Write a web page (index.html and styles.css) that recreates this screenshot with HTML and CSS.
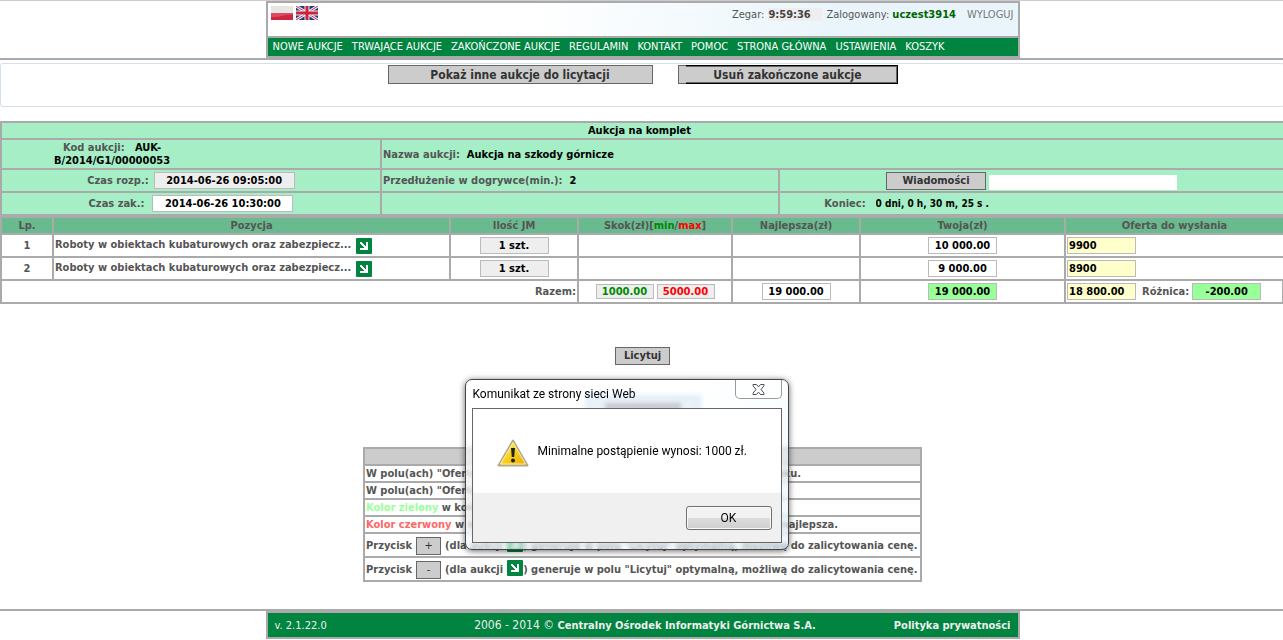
FILE: index.html
```html
<!DOCTYPE html>
<html lang="pl">
<head>
<meta charset="utf-8">
<title>Aukcja na szkody górnicze</title>
<link rel="stylesheet" href="styles.css">
</head>
<body>
<svg class="defs" width="0" height="0" aria-hidden="true">
  <symbol id="arrow" viewBox="0 0 16 16">
    <rect width="16" height="16" rx="1" fill="#00843f"/>
    <path d="M4 4h2v1h1v1h1v1h1v1h1V4h2v8H4v-2h4V9H7V8H6V7H5V6H4z" fill="#fff"/>
  </symbol>
</svg>
<div class="page">
  <header class="site-header">
    <div class="frame">
      <div class="top">
        <div class="flags">
          <svg width="22" height="14" viewBox="0 0 22 14" role="img" aria-label="Polski"><rect width="22" height="14" fill="#e6e6e3"/><rect y="7" width="22" height="7" fill="#cf2540"/><path d="M0 7h22v2C14 8 8 12 0 11z" fill="#dc4a60"/></svg>
          <svg width="22" height="14" viewBox="0 0 22 14" role="img" aria-label="English"><rect width="22" height="14" fill="#1d3a85"/><path d="M0 0l22 14M22 0L0 14" stroke="#eee" stroke-width="3"/><path d="M0 0l22 14M22 0L0 14" stroke="#d0314a" stroke-width="1"/><path d="M11 0v14M0 7h22" stroke="#eee" stroke-width="5"/><path d="M11 0v14M0 7h22" stroke="#d0213c" stroke-width="3"/></svg>
        </div>
        <div class="session">
          <span>Zegar:</span><span class="clock">9:59:36</span>
          <span>Zalogowany: <b>uczest3914</b></span><a href="#">WYLOGUJ</a>
        </div>
      </div>
      <nav class="nav">
        <a href="#">NOWE AUKCJE</a><a href="#">TRWAJĄCE AUKCJE</a><a href="#">ZAKOŃCZONE AUKCJE</a><a href="#">REGULAMIN</a><a href="#">KONTAKT</a><a href="#">POMOC</a><a href="#">STRONA GŁÓWNA</a><a href="#">USTAWIENIA</a><a href="#">KOSZYK</a>
      </nav>
    </div>
  </header>

  <div class="toolbar">
    <button class="btn big show">Pokaż inne aukcje do licytacji</button>
    <button class="btn big remove">Usuń zakończone aukcje</button>
  </div>

  <main>
    <table class="grid info">
      <colgroup><col class="i1"><col class="i2"><col></colgroup>
      <tr><td colspan="3" class="title">Aukcja na komplet</td></tr>
      <tr>
        <td><div class="code">Kod aukcji: &nbsp; <b>AUK-<br>B/2014/G1/00000053</b></div></td>
        <td colspan="2">Nazwa aukcji: &nbsp;<b>Aukcja na szkody górnicze</b></td>
      </tr>
      <tr>
        <td class="tall"><div class="line"><label for="start">Czas rozp.:</label><input id="start" class="date gray" value="2014-06-26 09:05:00" readonly></div></td>
        <td>Przedłużenie w dogrywce(min.): &nbsp;<b>2</b></td>
        <td><div class="line news"><button class="btn wide">Wiadomości</button><input class="message" aria-label="Wiadomości"></div></td>
      </tr>
      <tr>
        <td class="tall"><div class="line end"><label for="end">Czas zak.:</label><input id="end" class="date" value="2014-06-26 10:30:00" readonly></div></td>
        <td></td>
        <td><div class="line"><label for="left">Koniec:</label><input id="left" class="remaining" value="0 dni, 0 h, 30 m, 25 s ." readonly></div></td>
      </tr>
    </table>

    <table class="grid items">
      <colgroup><col class="c1"><col class="c2"><col class="c3"><col class="c4"><col class="c3"><col class="c6"><col></colgroup>
      <tr><th>Lp.</th><th>Pozycja</th><th>Ilość JM</th><th>Skok(zł)[<span class="min">min</span>/<span class="max">max</span>]</th><th>Najlepsza(zł)</th><th>Twoja(zł)</th><th>Oferta do wysłania</th></tr>
      <tr>
        <td>1</td>
        <td class="left"><div class="position">Roboty w obiektach kubaturowych oraz zabezpiecz...<svg class="arrow"><use href="#arrow"/></svg></div></td>
        <td><input class="gray" value="1 szt." aria-label="Ilość 1" readonly></td><td></td><td></td>
        <td><input value="10 000.00" aria-label="Twoja 1" readonly></td>
        <td class="left"><input class="offer" value="9900" aria-label="Oferta 1"></td>
      </tr>
      <tr>
        <td>2</td>
        <td class="left"><div class="position">Roboty w obiektach kubaturowych oraz zabezpiecz...<svg class="arrow"><use href="#arrow"/></svg></div></td>
        <td><input class="gray" value="1 szt." aria-label="Ilość 2" readonly></td><td></td><td></td>
        <td><input value="9 000.00" aria-label="Twoja 2" readonly></td>
        <td class="left"><input class="offer" value="8900" aria-label="Oferta 2"></td>
      </tr>
      <tr>
        <td colspan="3" class="right">Razem:</td>
        <td><div class="steps"><input class="step min" value="1000.00" aria-label="Skok min" readonly><input class="step max" value="5000.00" aria-label="Skok max" readonly></div></td>
        <td><input value="19 000.00" aria-label="Najlepsza razem" readonly></td>
        <td><input class="good" value="19 000.00" aria-label="Twoja razem" readonly></td>
        <td class="left last"><div class="total"><input class="offer" value="18 800.00" aria-label="Oferta razem"><label for="diff">Różnica:</label><input id="diff" class="good" value="-200.00" readonly></div></td>
      </tr>
    </table>

    <div class="actions">
      <button class="btn bid">Licytuj</button>
      <button class="btn refresh" aria-label="Odśwież"></button>
    </div>

    <table class="grid help">
      <tr><th></th></tr>
      <tr><td><div class="hint">W polu(ach) "Oferta do wysłania"<span>roku.</span></div></td></tr>
      <tr><td><div class="hint">W polu(ach) "Oferta do wysłania"</div></td></tr>
      <tr><td><span class="green">Kolor zielony</span> w kolumnie</td></tr>
      <tr><td><div class="hint best"><div><span class="red">Kolor czerwony</span> w kolumnie</div><span>najlepsza.</span></div></td></tr>
      <tr><td><div class="key">Przycisk <button class="btn sign">+</button> (dla aukcji <svg class="arrow"><use href="#arrow"/></svg><span>) generuje w polu "Licytuj" optymalną, możliwą do zalicytowania cenę.</span></div></td></tr>
      <tr><td><div class="key">Przycisk <button class="btn sign">-</button> (dla aukcji <svg class="arrow"><use href="#arrow"/></svg><span>) generuje w polu "Licytuj" optymalną, możliwą do zalicytowania cenę.</span></div></td></tr>
    </table>
  </main>

  <footer class="site-footer">
    <div class="frame foot">
      <span>v. 2.1.22.0</span>
      <span class="owner">2006 - 2014 © <b>Centralny Ośrodek Informatyki Górnictwa S.A.</b></span>
      <a href="#">Polityka prywatności</a>
    </div>
  </footer>
</div>

<div class="dialog" role="alertdialog" aria-labelledby="dialog-title">
  <div class="dialog-bar">
    <span id="dialog-title">Komunikat ze strony sieci Web</span>
    <button class="close" aria-label="Zamknij"><svg width="13" height="11" viewBox="0 0 13 11"><path d="M1 .5h3.500l2 2.400 2-2.400H12v1.300L9 5.500l3 3.700v1.300H8.500l-2-2.400-2 2.400H1V9.200l3-3.700-3-3.700z" fill="#fff" stroke="#4b4f5c"/></svg></button>
  </div>
  <div class="dialog-body">
    <div class="dialog-text">
      <svg width="32" height="28" viewBox="0 0 32 28"><defs><linearGradient id="warn" x1="0" y1="0" x2="1" y2="1"><stop offset="0" stop-color="#fff2a0"/><stop offset=".45" stop-color="#fbd521"/><stop offset="1" stop-color="#e9a500"/></linearGradient></defs><path d="M16 1.500L30.500 26.500h-29z" fill="url(#warn)" stroke="#b3a888" stroke-width="2" stroke-linejoin="round"/><path d="M16 3.500L28.500 25h-25z" fill="none" stroke="#fff3ac" stroke-width="1"/><path d="M14 9h4l-.8 9h-2.400z" fill="#222"/><circle cx="16" cy="21.500" r="2" fill="#222"/></svg>
      <span>Minimalne postąpienie wynosi: 1000 zł.</span>
    </div>
    <div class="dialog-buttons"><button class="ok">OK</button></div>
  </div>
</div>
</body>
</html>
```
FILE: styles.css
```css
* { box-sizing: border-box; }
html { overflow-x: hidden; background: #fff; }
body {
  margin: 0;
  overflow: hidden;
  font: 11px/13px "DejaVu Sans Condensed", "DejaVu Sans", sans-serif;
  color: #555;
}
a { color: inherit; text-decoration: none; }
button, input { font: inherit; }
.defs { position: absolute; }
/* the layout is one table gap wider than the window */
.page { width: calc(100% + 2px); }

.site-header { border-top: 1px solid #ccc; border-bottom: 2px solid #aaa; }
.frame { width: 754px; margin: 0 auto; border: 2px solid #aaa; }
.top {
  display: flex;
  justify-content: space-between;
  align-items: flex-start;
  height: 33px;
  padding: 3px 4px 0 3px;
  background: linear-gradient(100deg, #fff 35%, #eaf5fb 75%);
}
.flags { display: flex; gap: 3px; }
.session { display: flex; gap: 4px; padding-top: 2px; }
.session b { color: #060; }
.session a { margin-left: 7px; color: #777; }
.clock { width: 54px; font-weight: bold; color: #444; background: #eee; }
.nav {
  display: flex;
  gap: 9px;
  padding: 2px 5px 3px;
  border-top: 2px solid #aaa;
  background: #00843f;
  color: #fff;
}

.toolbar {
  display: flex;
  justify-content: center;
  gap: 25px;
  height: 44px;
  margin: 3px 0 14px;
  padding-top: 1px;
  border: 1px solid #d3dfec;
  border-radius: 3px;
}
.btn {
  height: 18px;
  padding: 0 6px;
  border: 1px solid #666;
  background: #ccc;
  color: #333;
  font-weight: bold;
  line-height: 16px;
}
.big { height: 19px; font-size: 12px; }
.show { width: 265px; }
.remove { position: relative; width: 220px; }
.remove::after {
  content: "";
  position: absolute;
  inset: -1px -1px -1px 7px;
  border: 1px solid #000;
  border-left: 0;
  box-shadow: inset -1px 0 #666, inset 0 1px #666, inset 0 -1px #666;
}
.wide { width: 100px; }

.grid { border-spacing: 2px; background: #aaa; font-weight: bold; }
.grid td, .grid th { padding: 1px; }
.info, .items { width: 100%; table-layout: fixed; }
.info td { background: #a5eec6; }
.info b { color: #000; }
.info .title { padding-right: 7px; text-align: center; color: #000; }
.i1 { width: 29.6%; }
.i2 { width: 31.01%; }
.code { width: 58%; text-align: center; }
.line { display: flex; justify-content: center; align-items: center; gap: 5px; }
.line.end { gap: 8px; }
.info .tall { padding: 2px; }
.grid input {
  width: 69px;
  height: 17px;
  padding: 0 1px;
  border: 1px solid #bbb;
  background: #fff;
  color: #000;
  font-weight: bold;
  text-align: center;
  vertical-align: top;
}
.grid .date { width: 141px; }
.grid .gray { background: #eee; }
.grid .message { width: 188px; height: 15px; border: 0; }
.info .news { gap: 3px; align-items: flex-end; }
.grid .remaining { width: 368px; padding-left: 5px; border: 0; background: none; font-size: 10px; text-align: left; }

.items td { padding: 2px 1px; background: #fff; text-align: center; }
.items th { background: #69ba8f; }
.c1 { width: 3.94%; }
.c2 { width: 31.13%; }
.c3 { width: 9.93%; }
.c4 { width: 11.98%; }
.c6 { width: 16%; }
.items .left { text-align: left; }
.items .right { text-align: right; }
.items .last { border-right: 1px solid #aaa; }
.position { display: flex; gap: 5px; white-space: nowrap; }
.arrow { flex: none; width: 16px; height: 16px; }
.grid .offer { background: #ffc; text-align: left; }
.grid .good { background: #9f9; }
.steps { display: flex; justify-content: center; gap: 3px; }
.grid .step { width: 58px; height: 15px; background: #eee; font-family: "DejaVu Sans", sans-serif; font-size: 10px; }
.grid .min { color: #080; }
.grid .max { color: #f00; }
.total { display: flex; align-items: center; gap: 3px; }
.total label { margin-left: 3px; }

.actions { display: flex; flex-direction: column; align-items: center; gap: 32px; padding: 43px 0 32px; }
.bid { width: 55px; }
.refresh {
  width: 112px;
  border-color: #9bd;
  background: linear-gradient(#778, #778) center / 76px 7px no-repeat #cde;
  box-shadow: 0 0 3px 2px #bdf;
}

.help { min-width: 559px; margin: 0 auto; white-space: nowrap; }
.help td { background: #fff; }
.help th { height: 15px; background: #ccc; }
.hint { display: flex; justify-content: space-between; padding-right: 118px; }
.hint.best { padding-right: 81px; }
.green { color: #9f9; }
.red { color: #f66; }
.key { display: flex; align-items: center; gap: 4px; height: 20px; padding-top: 1px; }
.key .arrow { align-self: flex-start; }
.key span { margin-left: -4px; }
.sign { width: 25px; font-weight: normal; }

.site-footer { margin-top: 27px; border-top: 2px solid #aaa; }
.foot { display: flex; justify-content: space-between; padding: 6px 7px 5px; background: #00843f; color: #eee; }
.foot a { font-weight: bold; }
.owner { margin: 0 78px 0 auto; font-size: 12px; }
.owner b { font-size: 11px; }

/* system message window lying over the page */
.dialog {
  position: absolute;
  top: 379px;
  left: calc(50% - 177px);
  width: 324px;
  padding: 0 6px 6px;
  border: 1px solid #444;
  border-radius: 7px;
  background: linear-gradient(160deg, rgba(255, 255, 255, .6) 30%, rgba(225, 243, 253, .6));
  backdrop-filter: blur(2px);
  box-shadow: 0 1px 6px rgba(0, 0, 0, .6);
  color: #000;
  font: 12px/16px Roboto, "Open Sans", sans-serif;
}
.dialog-bar { display: flex; justify-content: space-between; height: 28px; padding-left: 1px; }
.dialog-bar span { padding-top: 6px; }
.close {
  display: flex;
  justify-content: center;
  align-items: center;
  width: 47px;
  height: 19px;
  border: 1px solid #999;
  border-top: 0;
  border-radius: 0 0 5px 5px;
  background: rgba(255, 255, 255, .6);
}
.dialog-body { border: 1px solid #666; background: #f0f0f0; }
.dialog-text { display: flex; align-items: center; gap: 9px; height: 84px; padding: 4px 25px 0 24px; background: #fff; white-space: nowrap; }
.dialog-text span { margin-bottom: 4px; }
.dialog-buttons { display: flex; justify-content: flex-end; padding: 13px 9px 12px; }
.ok {
  width: 86px;
  height: 24px;
  border: 1px solid #707070;
  border-radius: 3px;
  background: linear-gradient(#f2f2f2 50%, #ddd 50%, #cfcfcf);
  box-shadow: inset 0 0 0 1px #fafafa;
}
```
